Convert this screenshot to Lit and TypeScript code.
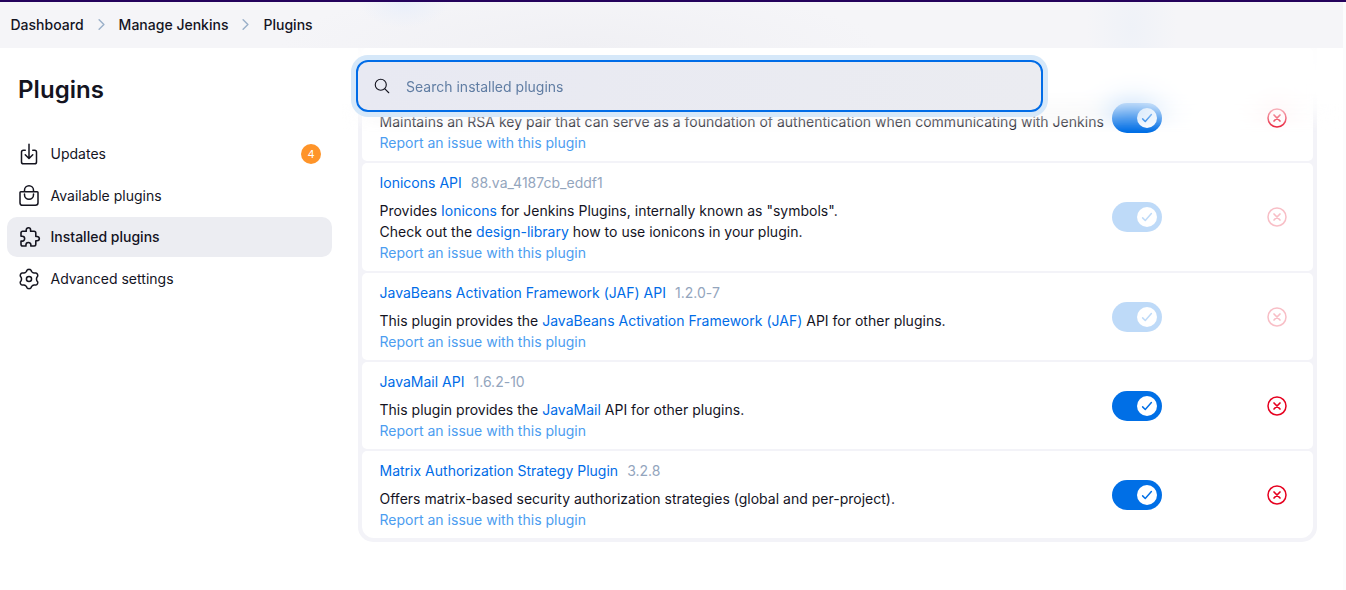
import { LitElement, html, css, svg } from "lit";
import { customElement } from "lit/decorators.js";

const icon = (body: unknown, cls = "icon") =>
  html`<svg class=${cls} viewBox="0 0 512 512" fill="none" stroke="currentColor" stroke-width="32" stroke-linecap="round" stroke-linejoin="round">${body}</svg>`;

// Six broad lobes around the centre, the first pointing straight up.
const gearPath = (() => {
  const pts: string[] = [];
  for (let i = 0; i < 120; i++) {
    const a = (i / 120) * Math.PI * 2;
    const c = Math.cos(6 * a);
    const r = 183 + 23 * Math.sign(c) * Math.pow(Math.abs(c), 0.6);
    pts.push(`${(256 + r * Math.sin(a)).toFixed(1)} ${(256 - r * Math.cos(a)).toFixed(1)}`);
  }
  return `M${pts.join("L")}Z`;
})();

const download = svg`<path d="M336 176h40a40 40 0 0140 40v208a40 40 0 01-40 40H136a40 40 0 01-40-40V216a40 40 0 0140-40h40"/><path d="M176 272l80 80 80-80M256 48v288"/>`;
const bag = svg`<g transform="translate(0 -10)"><path d="M80 176a16 16 0 00-16 16v216c0 30.240 25.760 56 56 56h272c30.240 0 56-24.510 56-54.750V192a16 16 0 00-16-16zM160 176v-32a96 96 0 0196-96h0a96 96 0 0196 96v32"/><path d="M160 224v16a96 96 0 0096 96h0a96 96 0 0096-96v-16"/></g>`;
const puzzle = svg`<g transform="translate(40 13) scale(.94)" stroke-width="36"><path d="M413.660 246.100H386a2 2 0 01-2-2v-77.240A38.860 38.860 0 00345.140 128H267.900a2 2 0 01-2-2V98.340c0-27.140-21.500-49.860-48.640-50.330a49.530 49.530 0 00-50.400 49.510V126a2 2 0 01-2 2H87.620A39.740 39.740 0 0048 167.620V238a2 2 0 002 2h26.910c29.370 0 53.680 25.480 54.090 54.850.42 29.870-23.510 57.150-53.290 57.150H50a2 2 0 00-2 2v70.380A39.740 39.740 0 0087.620 464H158a2 2 0 002-2v-20.930c0-30.280 24.750-56.350 55-57.060 30.100-.7 57 20.310 57 50.280V462a2 2 0 002 2h71.140A38.860 38.860 0 00384 425.140v-78a2 2 0 012-2h28.480c27.630 0 49.520-22.670 49.520-50.400s-23.200-48.640-50.340-48.640z"/></g>`;
const gear = svg`<path d=${gearPath} stroke-width="32"/><circle cx="256" cy="256" r="55" stroke-width="32"/>`;
const search = svg`<path d="M221.090 64a157.090 157.090 0 10157.090 157.090A157.100 157.100 0 00221.090 64z"/><path d="M338.290 338.290L448 448"/>`;
const chevron = svg`<path d="M184 112l144 144-144 144" stroke-width="44"/>`;
const check = svg`<path d="M416 128L192 384l-96-96" stroke-width="54"/>`;
const close = svg`<path d="M448 256c0-106-86-192-192-192S64 150 64 256s86 192 192 192 192-86 192-192z"/><path d="M320 320L192 192M192 320l128-128" stroke-width="36"/>`;

const link = (t: string) => html`<a class="link">${t}</a>`;

interface Plugin { name?: string; version?: string; desc: unknown; locked?: boolean }

const plugins: Plugin[] = [
  { desc: "Maintains an RSA key pair that can serve as a foundation of authentication when communicating with Jenkins" },
  { name: "Ionicons API", version: "88.va_4187cb_eddf1", locked: true,
    desc: html`Provides ${link("Ionicons")} for Jenkins Plugins, internally known as "symbols".<br />Check out the ${link("design-library")} how to use ionicons in your plugin.` },
  { name: "JavaBeans Activation Framework (JAF) API", version: "1.2.0-7", locked: true,
    desc: html`This plugin provides the ${link("JavaBeans Activation Framework (JAF)")} API for other plugins.` },
  { name: "JavaMail API", version: "1.6.2-10",
    desc: html`This plugin provides the ${link("JavaMail")} API for other plugins.` },
  { name: "Matrix Authorization Strategy Plugin", version: "3.2.8",
    desc: "Offers matrix-based security authorization strategies (global and per-project)." },
];

@customElement("app-root")
export class AppRoot extends LitElement {
  static styles = css`
    :host { display: block; position: relative; width: 1346px; height: 590px; overflow: hidden; background: #fff;
      font: 14px/21px Inter, sans-serif; letter-spacing: .008px; color: #14141f; box-sizing: border-box; }
    * { box-sizing: border-box; }
    .crumbs { position: relative; z-index: 3; height: 48px; border-top: 2px solid #24025c; display: flex; align-items: center;
      padding: 0 0 0 10.500px; background: #f5f5f8; font-weight: 500; margin-right: 3px; }
    .crumbs span { margin-top: -2px; }
    .edge { position: absolute; right: 0; top: 2px; width: 3px; height: 588px; background: #fcfcfd; }
    .strip { position: absolute; right: 0; top: 0; width: 3px; height: 2px; background: #24025c; }
    .sep { width: 17px; height: 17px; color: #9bb0c9; margin: -1px 9px 0; }
    .tint { position: absolute; inset: 0; background:
      radial-gradient(ellipse 45px 26px at 404px 0, #e9effa, transparent),
      radial-gradient(ellipse 45px 80px at 1132px 26px, #eff2f8, transparent),
      radial-gradient(ellipse 300px 60px at 580px 44px, #f0f0f4, transparent); z-index: -1; }
    .body { display: flex; height: 542px; }
    .side { width: 332px; padding: 24px 0 0 7px; }
    h1 { margin: 0 0 26px 11px; font-size: 24px; line-height: 36px; font-weight: 600; letter-spacing: .06px; }
    .item { display: flex; align-items: center; height: 40px; margin-bottom: 1.660px; padding: 0 11px 0 10px; border-radius: 10px; }
    .item.on { background: #ecedf2; font-weight: 500; }
    .label { margin-top: -1px; }
    .icon { width: 24px; height: 24px; margin-right: 9.500px; flex: none; }
    .badge { margin-left: auto; width: 20px; height: 20px; border-radius: 50%; background: #fe9429; color: #fff; font-size: 11px; line-height: 20px; text-align: center; }
    .main { position: relative; flex: 1; padding-left: 26px; }
    .table { width: 959px; padding: 0 4px 4px; background: #f3f3f8; border-radius: 0 0 15px 15px; display: flex; flex-direction: column; gap: 2px; }
    .row { display: flex; align-items: center; background: #fff; border-radius: 5px; padding: 9px 0 8px 17.500px; position: relative; }
    .row.cut { height: 113px; align-items: flex-end; }
    .row:last-child { border-radius: 5px 5px 12px 12px; }
    .text { width: 732.500px; white-space: nowrap; }
    .head { margin-bottom: 7px; }
    .link { color: #006ce7; }
    .ver { color: #93a5bd; margin-left: 9px; }
    .report { color: #4c9df0; }
    .ctl { display: flex; align-items: center; margin-top: -1px; }
    .cut .ctl { margin-bottom: 20px; }
    .toggle { width: 50px; height: 30px; border-radius: 15px; background: #006fe6; padding: 5px; display: flex; justify-content: flex-end; }
    .knob { width: 20px; height: 20px; border-radius: 50%; background: #fff; color: #006fe6; display: flex; align-items: center; justify-content: center; }
    .tick { width: 14px; height: 14px; }
    .x { width: 24px; height: 24px; color: #e6001f; margin-left: 103px; }
    .locked .ctl { opacity: .25; }
    .veil { position: absolute; left: 10px; right: 3px; top: 0; height: 84px; background: rgba(255, 255, 255, .75);
      backdrop-filter: blur(15px); -webkit-mask-image: linear-gradient(#000 50%, transparent); mask-image: linear-gradient(#000 50%, transparent); }
    .search { position: absolute; left: 24px; top: 12px; width: 687px; height: 52px; border: 2px solid #006ce7; border-radius: 12px;
      box-shadow: 0 0 0 5px #d6e8f9; background: linear-gradient(90deg, #e8e9f2, #ebecf1); display: flex; align-items: center; padding-left: 15px; color: #14141f; }
    .search .lens { width: 18px; height: 18px; margin-right: 15px; }
    .ph { color: #607da3; }
  `;

  private row(p: Plugin) {
    return html`<div class="row ${p.name ? "" : "cut"} ${p.locked ? "locked" : ""}">
      <div class="text">
        ${p.name ? html`<div class="head"><a class="link">${p.name}</a><span class="ver">${p.version}</span></div>` : ""}
        <div>${p.desc}</div>
        <div class="report">Report an issue with this plugin</div>
      </div>
      <div class="ctl"><div class="toggle"><div class="knob">${icon(check, "tick")}</div></div>${icon(close, "x")}</div>
    </div>`;
  }

  render() {
    return html`
      <nav class="crumbs"><div class="tint"></div>
        <span>Dashboard</span>${icon(chevron, "sep")}<span>Manage Jenkins</span>${icon(chevron, "sep")}<span>Plugins</span>
      </nav>
      <div class="body">
        <aside class="side">
          <h1>Plugins</h1>
          <div class="item">${icon(download)}<span class="label">Updates</span><span class="badge">4</span></div>
          <div class="item">${icon(bag)}<span class="label">Available plugins</span></div>
          <div class="item on">${icon(puzzle)}<span class="label">Installed plugins</span></div>
          <div class="item">${icon(gear)}<span class="label">Advanced settings</span></div>
        </aside>
        <main class="main">
          <div class="table">${plugins.map((p) => this.row(p))}</div>
          <div class="veil"></div>
          <div class="search">${icon(search, "lens")}<span class="ph">Search installed plugins</span></div>
        </main>
      </div>
      <div class="edge"></div><div class="strip"></div>`;
  }
}
